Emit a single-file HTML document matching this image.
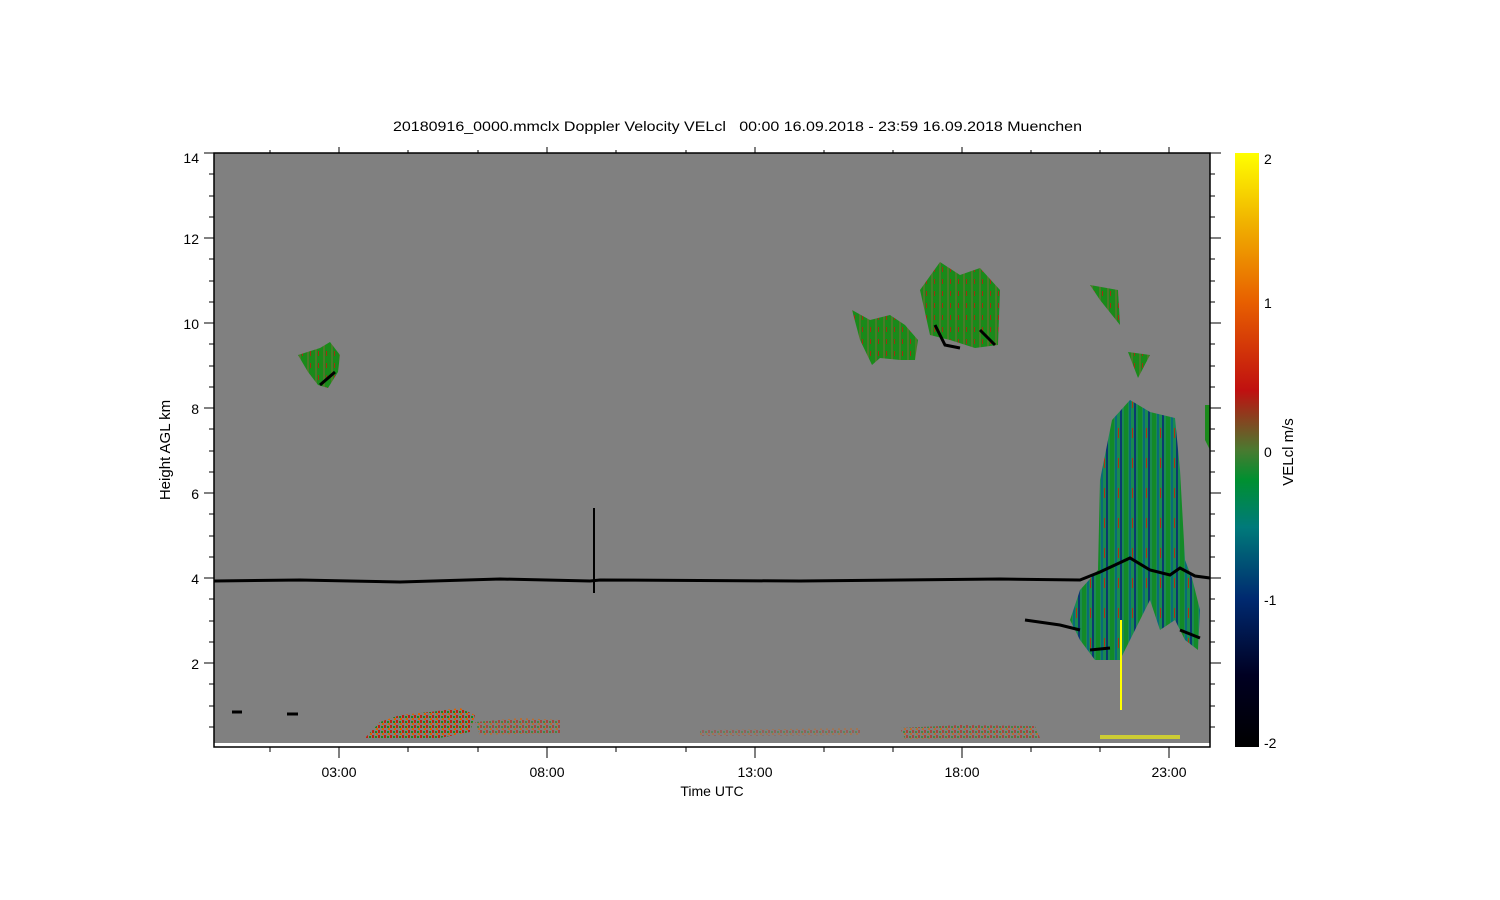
<!DOCTYPE html>
<html><head><meta charset="utf-8"><style>
html,body{margin:0;padding:0;background:#fff;width:1500px;height:900px;overflow:hidden}
svg{display:block}
text{font-family:"Liberation Sans",sans-serif;font-size:14px;fill:#000}
</style></head><body>
<svg width="1500" height="900" xmlns="http://www.w3.org/2000/svg">
<defs>
<linearGradient id="cb" x1="0" y1="1" x2="0" y2="0">
<stop offset="0" stop-color="#000"/>
<stop offset="0.12" stop-color="#000022"/>
<stop offset="0.25" stop-color="#002a70"/>
<stop offset="0.37" stop-color="#007a7a"/>
<stop offset="0.45" stop-color="#009030"/>
<stop offset="0.5" stop-color="#4a7a30"/>
<stop offset="0.6" stop-color="#c01010"/>
<stop offset="0.75" stop-color="#e86000"/>
<stop offset="0.88" stop-color="#f0b000"/>
<stop offset="1" stop-color="#ffff00"/>
</linearGradient>
<pattern id="storm" width="14" height="30" patternUnits="userSpaceOnUse">
<rect width="14" height="30" fill="#1a8a50"/>
<rect x="0" width="2" height="30" fill="#0a3a70"/>
<rect x="4" width="4" height="30" fill="#138a28"/>
<rect x="9" width="2" height="30" fill="#0a6a7a"/>
<rect x="12" y="8" width="1" height="10" fill="#b03010"/>
</pattern>
<pattern id="grn" width="8" height="12" patternUnits="userSpaceOnUse">
<rect width="8" height="12" fill="#1a8a1a"/>
<rect x="3" width="2" height="12" fill="#4a7a28"/>
<rect x="6" y="3" width="1" height="5" fill="#a03010"/>
</pattern>
<pattern id="low" width="6" height="5" patternUnits="userSpaceOnUse">
<rect width="6" height="5" fill="#808080"/>
<rect x="0" width="2" height="3" fill="#c02010"/>
<rect x="3" y="1" width="2" height="2" fill="#1a8a1a"/>
<rect x="4" y="3" width="2" height="2" fill="#e06000"/>
</pattern>
</defs>
<text x="393" y="131" textLength="689" lengthAdjust="spacingAndGlyphs" xml:space="preserve">20180916_0000.mmclx Doppler Velocity VELcl   00:00 16.09.2018 - 23:59 16.09.2018 Muenchen</text>
<rect x="214" y="153" width="996" height="590" fill="#808080"/>
<path d="M298,355 L320,348 L330,342 L340,355 L338,372 L328,388 L318,385 L308,372 Z" fill="url(#grn)"/>
<path d="M852,310 L870,320 L890,315 L905,325 L918,340 L915,360 L900,360 L880,358 L872,365 L860,340 Z" fill="url(#grn)"/>
<path d="M920,290 L940,262 L960,275 L980,268 L1000,290 L998,345 L975,348 L950,340 L930,335 Z" fill="url(#grn)"/>
<path d="M1090,285 L1118,290 L1120,325 L1100,300 Z" fill="url(#grn)"/>
<path d="M1128,352 L1150,355 L1138,378 Z" fill="url(#grn)"/>
<path d="M1205,405 L1210,405 L1210,450 L1205,440 Z" fill="#1a8a1a"/>
<path d="M1100,480 L1112,420 L1130,400 L1150,412 L1175,418 L1180,470 L1185,560 L1192,578 L1200,610 L1198,650 L1185,640 L1175,620 L1160,630 L1150,600 L1135,630 L1120,660 L1095,660 L1080,640 L1070,620 L1080,590 L1098,570 Z" fill="url(#storm)"/>
<path d="M365,738 L380,722 L400,715 L430,712 L460,708 L475,715 L470,732 L440,738 Z" fill="url(#low)"/>
<path d="M475,722 L520,718 L560,720 L560,733 L480,735 Z" fill="url(#low)" opacity="0.6"/>
<path d="M900,728 L960,725 L1035,726 L1040,738 L905,739 Z" fill="url(#low)" opacity="0.6"/>
<path d="M700,730 L860,728 L860,735 L700,736 Z" fill="url(#low)" opacity="0.35"/>
<path d="M214,581 L300,580 L400,582 L500,579 L590,581 L600,580 L800,581 L1000,579 L1080,580 L1100,572 L1130,558 L1150,570 L1170,575 L1180,568 L1195,576 L1210,578" stroke="#000" stroke-width="3" fill="none"/>
<line x1="594" y1="508" x2="594" y2="593" stroke="#000" stroke-width="2"/>
<path d="M1025,620 L1060,625 L1080,630 M1090,650 L1110,648 M1180,630 L1200,638 M935,325 L945,345 L960,348 M980,330 L995,345 M320,385 L335,372" stroke="#000" stroke-width="3" fill="none"/>
<path d="M232,712 L242,712 M287,714 L298,714" stroke="#000" stroke-width="3"/>
<line x1="1121" y1="620" x2="1121" y2="710" stroke="#ff0" stroke-width="2"/>
<rect x="1100" y="735" width="80" height="4" fill="#ff0" opacity="0.6"/>
<rect x="214" y="743" width="996" height="4" fill="#fff"/>
<rect x="214" y="153" width="996" height="594" fill="none" stroke="#000" stroke-width="1.5"/>
<g stroke="#000" stroke-width="1">
<path d="M204,153H214 M204,238H214 M204,323H214 M204,408H214 M204,493H214 M204,578H214 M204,663H214"/>
<path d="M1210,153H1221 M1210,238H1221 M1210,323H1221 M1210,408H1221 M1210,493H1221 M1210,578H1221 M1210,663H1221"/>
<path d="M209,174H214 M209,196H214 M209,217H214 M209,259H214 M209,281H214 M209,302H214 M209,344H214 M209,366H214 M209,387H214 M209,429H214 M209,451H214 M209,472H214 M209,514H214 M209,536H214 M209,557H214 M209,599H214 M209,621H214 M209,642H214 M209,684H214 M209,706H214 M209,727H214"/>
<path d="M1210,174H1215 M1210,196H1215 M1210,217H1215 M1210,259H1215 M1210,281H1215 M1210,302H1215 M1210,344H1215 M1210,366H1215 M1210,387H1215 M1210,429H1215 M1210,451H1215 M1210,472H1215 M1210,514H1215 M1210,536H1215 M1210,557H1215 M1210,599H1215 M1210,621H1215 M1210,642H1215 M1210,684H1215 M1210,706H1215 M1210,727H1215"/>
<path d="M339,747V758 M547,747V758 M755,747V758 M962,747V758 M1169,747V758 M339,153V147 M547,153V147 M755,153V147 M962,153V147 M1169,153V147"/>
<path d="M270,747V752 M408,747V752 M478,747V752 M616,747V752 M686,747V752 M824,747V752 M893,747V752 M1031,747V752 M1100,747V752 M270,153V150 M408,153V150 M478,153V150 M616,153V150 M686,153V150 M824,153V150 M893,153V150 M1031,153V150 M1100,153V150"/>
</g>
<g text-anchor="end" style="font-size:15px">
<text x="199" y="163">14</text><text x="199" y="244">12</text><text x="199" y="329">10</text>
<text x="199" y="414">8</text><text x="199" y="499">6</text><text x="199" y="584">4</text><text x="199" y="669">2</text>
</g>
<g text-anchor="middle" style="font-size:15px">
<text x="339" y="777">03:00</text><text x="547" y="777">08:00</text><text x="755" y="777">13:00</text>
<text x="962" y="777">18:00</text><text x="1169" y="777">23:00</text>
<text x="712" y="796">Time UTC</text>
</g>
<text transform="translate(170,450) rotate(-90)" text-anchor="middle" style="font-size:15px">Height AGL km</text>
<rect x="1235" y="153" width="24" height="594" fill="url(#cb)"/>
<g style="font-size:15px">
<text x="1264" y="164">2</text><text x="1264" y="308">1</text><text x="1264" y="457">0</text>
<text x="1264" y="605">-1</text><text x="1264" y="748">-2</text>
</g>
<text transform="translate(1293,452) rotate(-90)" text-anchor="middle" style="font-size:15px">VELcl m/s</text>
</svg>
</body></html>
